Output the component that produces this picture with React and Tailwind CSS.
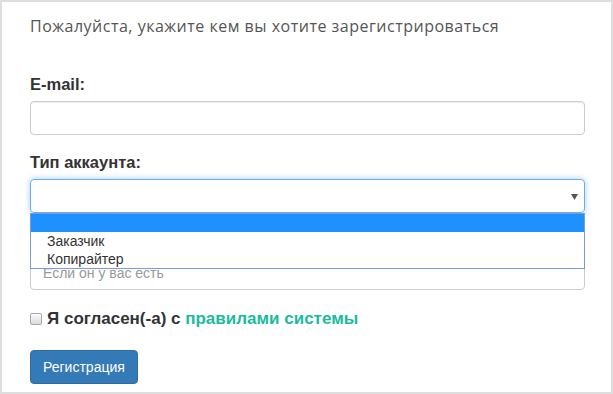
import React from 'react';

const arial = { fontFamily: '"Liberation Sans", Arial, sans-serif' };

function Field({ label, className = '', children }) {
    return (
        <div className={`flex flex-col ${className}`}>
            <label className="text-[16.5px] font-bold text-[#333] leading-[21px] h-[21px] mb-[6px]">{label}</label>
            {children}
        </div>
    );
}

export default function App() {
    return (
        <div className="w-[613px] h-[394px] border-2 border-[#dedede] bg-white overflow-hidden" style={arial}>
            <div className="pl-[28px] pr-[26px] pt-[13px]">
                <p className="text-[16px] tracking-[0.5px] text-[#555] leading-[22px] mb-[37px]" style={{ fontFamily: '"Open Sans", sans-serif' }}>
                    Пожалуйста, укажите кем вы хотите зарегистрироваться
                </p>

                <Field label="E-mail:">
                    <input className="h-[34px] w-full rounded-[4px] border border-[#ccc] shadow-[inset_0_1px_1px_rgba(0,0,0,0.075)] outline-none px-3" />
                </Field>

                <Field label="Тип аккаунта:" className="mt-[17px]">
                    <div className="relative">
                        <div className="h-[34px] w-full rounded-[4px] border border-[#66afe9] shadow-[0_0_6px_rgba(102,175,233,0.6)] flex items-center justify-end pr-[6px]">
                            <svg width="7" height="6" viewBox="0 0 7 6" className="mt-[1px]">
                                <path d="M0 0 L7 0 L3.5 6 Z" fill="#555" />
                            </svg>
                        </div>
                        <div className="absolute left-0 right-0 top-full border border-[#7b9bd6] bg-white z-10 text-[14px] text-[#333] leading-[18px]">
                            <div className="h-[18px] bg-[#1e90ff]"></div>
                            <div className="pl-[16px] h-[18px]">Заказчик</div>
                            <div className="pl-[16px] h-[18px]">Копирайтер</div>
                        </div>
                    </div>
                </Field>

                {/* the label of this field sits under the open dropdown */}
                <Field label="" className="mt-[16px]">
                    <input placeholder="Если он у вас есть" className="h-[34px] w-full rounded-[4px] border border-[#ccc] outline-none px-3 text-[14px] placeholder:text-[#999]" />
                </Field>

                <div className="flex items-center mt-[18px] text-[17px] leading-[21px] font-bold text-[#333]">
                    <span className="w-[12px] h-[12px] rounded-[2px] border border-[#a9a9a9] bg-gradient-to-b from-[#fdfdfd] to-[#dadada] mr-[5px]"></span>
                    <span>Я согласен(-а) с <a className="text-[#1abc9c]">правилами системы</a></span>
                </div>

                <button className="mt-[21px] h-[34px] px-[12px] rounded-[4px] bg-[#337ab7] border border-[#2e6da4] text-white text-[14px]">
                    Регистрация
                </button>
            </div>
        </div>
    );
}
